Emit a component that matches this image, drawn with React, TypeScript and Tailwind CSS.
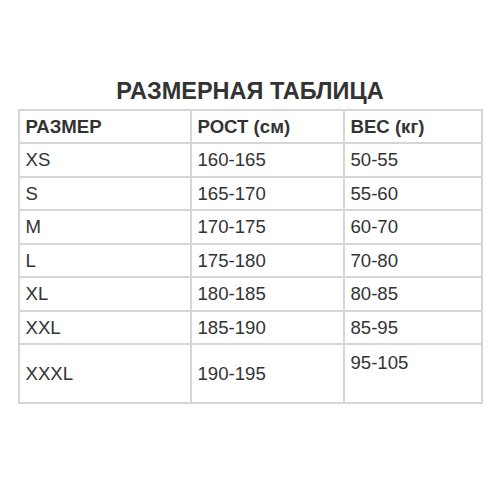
import React from 'react';

const rows: [string, string, string][] = [
    ['XS', '160-165', '50-55'],
    ['S', '165-170', '55-60'],
    ['M', '170-175', '60-70'],
    ['L', '175-180', '70-80'],
    ['XL', '180-185', '80-85'],
    ['XXL', '185-190', '85-95'],
];

export default function App() {
    const cell = 'border-2 border-[#d6d6d6] pl-[6px] h-[33.5px] align-middle';

    return (
        <div className="w-[500px] h-[500px] bg-white text-[#333] font-['Liberation_Sans',Arial,sans-serif] flex flex-col items-center pt-[80px]">
            <h1 className="text-[23.5px] leading-none font-bold mb-[5px]">РАЗМЕРНАЯ ТАБЛИЦА</h1>
            <table className="table-fixed border-collapse w-[465px] text-[18.6px] leading-[1.15]">
                <colgroup>
                    <col className="w-[172px]" />
                    <col className="w-[153px]" />
                    <col />
                </colgroup>
                <thead>
                    <tr>
                        <th className={`${cell} text-left font-bold`}>РАЗМЕР</th>
                        <th className={`${cell} text-left font-bold`}>РОСТ (см)</th>
                        <th className={`${cell} text-left font-bold`}>ВЕС (кг)</th>
                    </tr>
                </thead>
                <tbody>
                    {rows.map(([size, height, weight]) => (
                        <tr key={size}>
                            <td className={cell}>{size}</td>
                            <td className={cell}>{height}</td>
                            <td className={cell}>{weight}</td>
                        </tr>
                    ))}
                    <tr>
                        <td className="border-2 border-[#d6d6d6] pl-[6px] h-[59px] align-middle">XXXL</td>
                        <td className="border-2 border-[#d6d6d6] pl-[6px] h-[59px] align-middle">190-195</td>
                        <td className="border-2 border-[#d6d6d6] pl-[6px] pt-[7px] h-[59px] align-top">95-105</td>
                    </tr>
                </tbody>
            </table>
        </div>
    );
}
